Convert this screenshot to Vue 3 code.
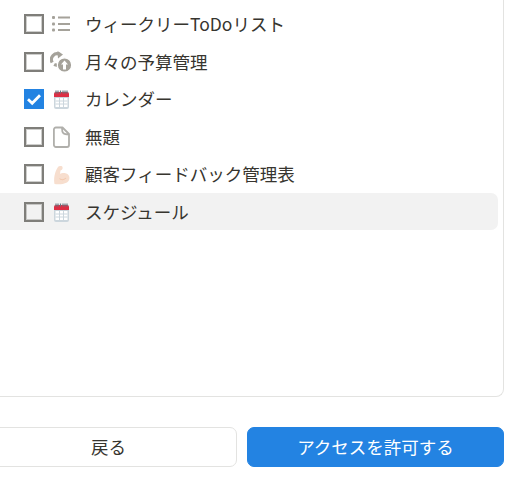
<script setup>
const paginas = [
  { id: 1, nome: 'ウィークリーToDoリスト', icone: 'lista', marcado: false },
  { id: 2, nome: '月々の予算管理', icone: 'sync', marcado: false },
  { id: 3, nome: 'カレンダー', icone: 'calendario', marcado: true },
  { id: 4, nome: '無題', icone: 'pagina', marcado: false },
  { id: 5, nome: '顧客フィードバック管理表', icone: 'braco', marcado: false },
  { id: 6, nome: 'スケジュール', icone: 'calendario', marcado: false, hover: true },
]
</script>

<template>
  <main class="pagina">
    <section class="quadro">
      <ul class="lista">
        <li v-for="item in paginas" :key="item.id" class="linha" :class="{ hover: item.hover }">
          <span class="caixa" :class="{ marcada: item.marcado }">
            <svg v-if="item.marcado" width="20" height="20" viewBox="0 0 20 20">
              <path d="M4 10.200 8.200 14.200 16 6.200" fill="none" stroke="#fff" stroke-width="2.800" />
            </svg>
          </span>

          <svg class="icone" width="22" height="22" viewBox="0 0 22 22">
            <g v-if="item.icone === 'lista'" fill="#a5a29a">
              <rect x="2" y="3" width="3" height="3" rx="1" />
              <rect x="2" y="9.500" width="3" height="3" rx="1" />
              <rect x="2" y="15.500" width="3" height="3" rx="1" />
              <rect x="8" y="3.500" width="12" height="2" />
              <rect x="8" y="10" width="12" height="2" />
              <rect x="8" y="16" width="12" height="2" />
            </g>

            <g v-else-if="item.icone === 'sync'">
              <path d="M9.800 3.400A5.800 5.800 0 0 0 2.200 11.500M4.200 13.300A5.800 5.800 0 0 0 8 14" fill="none" stroke="#a5a29a" stroke-width="3.200" />
              <path d="M7.500 0 13 3.500 8 7.500z" fill="#a5a29a" />
              <circle cx="14.500" cy="14" r="7.200" fill="#a5a29a" stroke="#fff" stroke-width="1.200" />
              <path d="M14.500 9.500 18 13.500H16V18.500H13V13.500H11z" fill="#fff" />
            </g>

            <g v-else-if="item.icone === 'calendario'">
              <rect x="4" y="4" width="15" height="17" rx="2" fill="#ccd6dd" />
              <rect x="5.500" y="10" width="12" height="9" fill="#fff" />
              <path d="M9.500 10v9M13.500 10v9M5.500 13h12M5.500 16h12" stroke="#ccd6dd" />
              <path d="M4 9V6a2 2 0 0 1 2-2h11a2 2 0 0 1 2 2v3z" fill="#dd2e44" />
              <path d="M6 2.500v3M8 2.500v3M10.500 2.500v3M13 2.500v3M15 2.500v3M17 2.500v3" stroke="#66757f" stroke-width="1.200" />
            </g>

            <path
              v-else-if="item.icone === 'pagina'"
              d="M3.900 3.500A2 2 0 0 1 5.900 1.500H12.500L19 8V19A2 2 0 0 1 17 21H5.900A2 2 0 0 1 3.900 19ZM12 2C12 7 13 8.500 19 8.500"
              fill="#fff"
              stroke="#b0afab"
              stroke-width="1.800"
              stroke-linejoin="round"
            />

            <g v-else>
              <path d="M4.500 21C3.500 16 4.500 9 8 4 9 3 12 2.500 12.500 4 13 6 12 7 10.500 7.500L10 11C12 9.500 16 9.500 18 11.500 20.500 14 19.500 18 17 19.500 13 21.500 8 21.500 4.500 21Z" fill="#f7dece" />
              <path d="M9.500 15.500C11 17.200 14 17.200 16 15" fill="none" stroke="#f3c8ad" stroke-width="1.100" />
            </g>
          </svg>

          <span class="nome">{{ item.nome }}</span>
        </li>
      </ul>
    </section>

    <div class="botoes">
      <button class="voltar">戻る</button>
      <button class="permitir">アクセスを許可する</button>
    </div>
  </main>
</template>

<style scoped>
.pagina {
  width: 504px;
  height: 493px;
  font-family: "Noto Sans CJK JP", "Liberation Sans", sans-serif;
  color: #37352f;
}

.quadro {
  box-sizing: border-box;
  height: 397px;
  padding-top: 5.250px;
  border-right: 1px solid #e3e3e1;
  border-bottom: 1px solid #e3e3e1;
  border-bottom-right-radius: 8px;
}

.lista {
  margin: 0;
  padding: 0 5px 0 0;
  list-style: none;
}

.linha {
  display: flex;
  align-items: center;
  height: 37.500px;
  padding-left: 24px;
  border-radius: 0 7px 7px 0;
}

.hover {
  background: #f2f2f2;
}

.caixa {
  box-sizing: border-box;
  flex: none;
  width: 20px;
  height: 20px;
  border: 2px solid #7f7e7a;
  box-shadow: inset 0 0 0 1px rgba(133, 132, 127, 0.4);
}

.caixa.marcada {
  border: 0;
  box-shadow: none;
  background: #2383e2;
}

.caixa svg {
  display: block;
}

.icone {
  flex: none;
  margin-left: 6px;
}

.nome {
  margin-left: 13px;
  font-size: 17.500px;
  line-height: 24px;
  white-space: nowrap;
}

.botoes {
  display: flex;
  gap: 10px;
  margin-top: 30px;
  margin-left: -20px;
}

button {
  flex: 1;
  height: 40px;
  padding: 0 0 2px;
  border-radius: 7px;
  font-family: inherit;
  font-size: 17.500px;
}

.voltar {
  border: 1px solid #e3e3e1;
  background: #fff;
  color: #37352f;
}

.permitir {
  border: 1px solid #2383e2;
  background: #2383e2;
  color: #fff;
}
</style>
